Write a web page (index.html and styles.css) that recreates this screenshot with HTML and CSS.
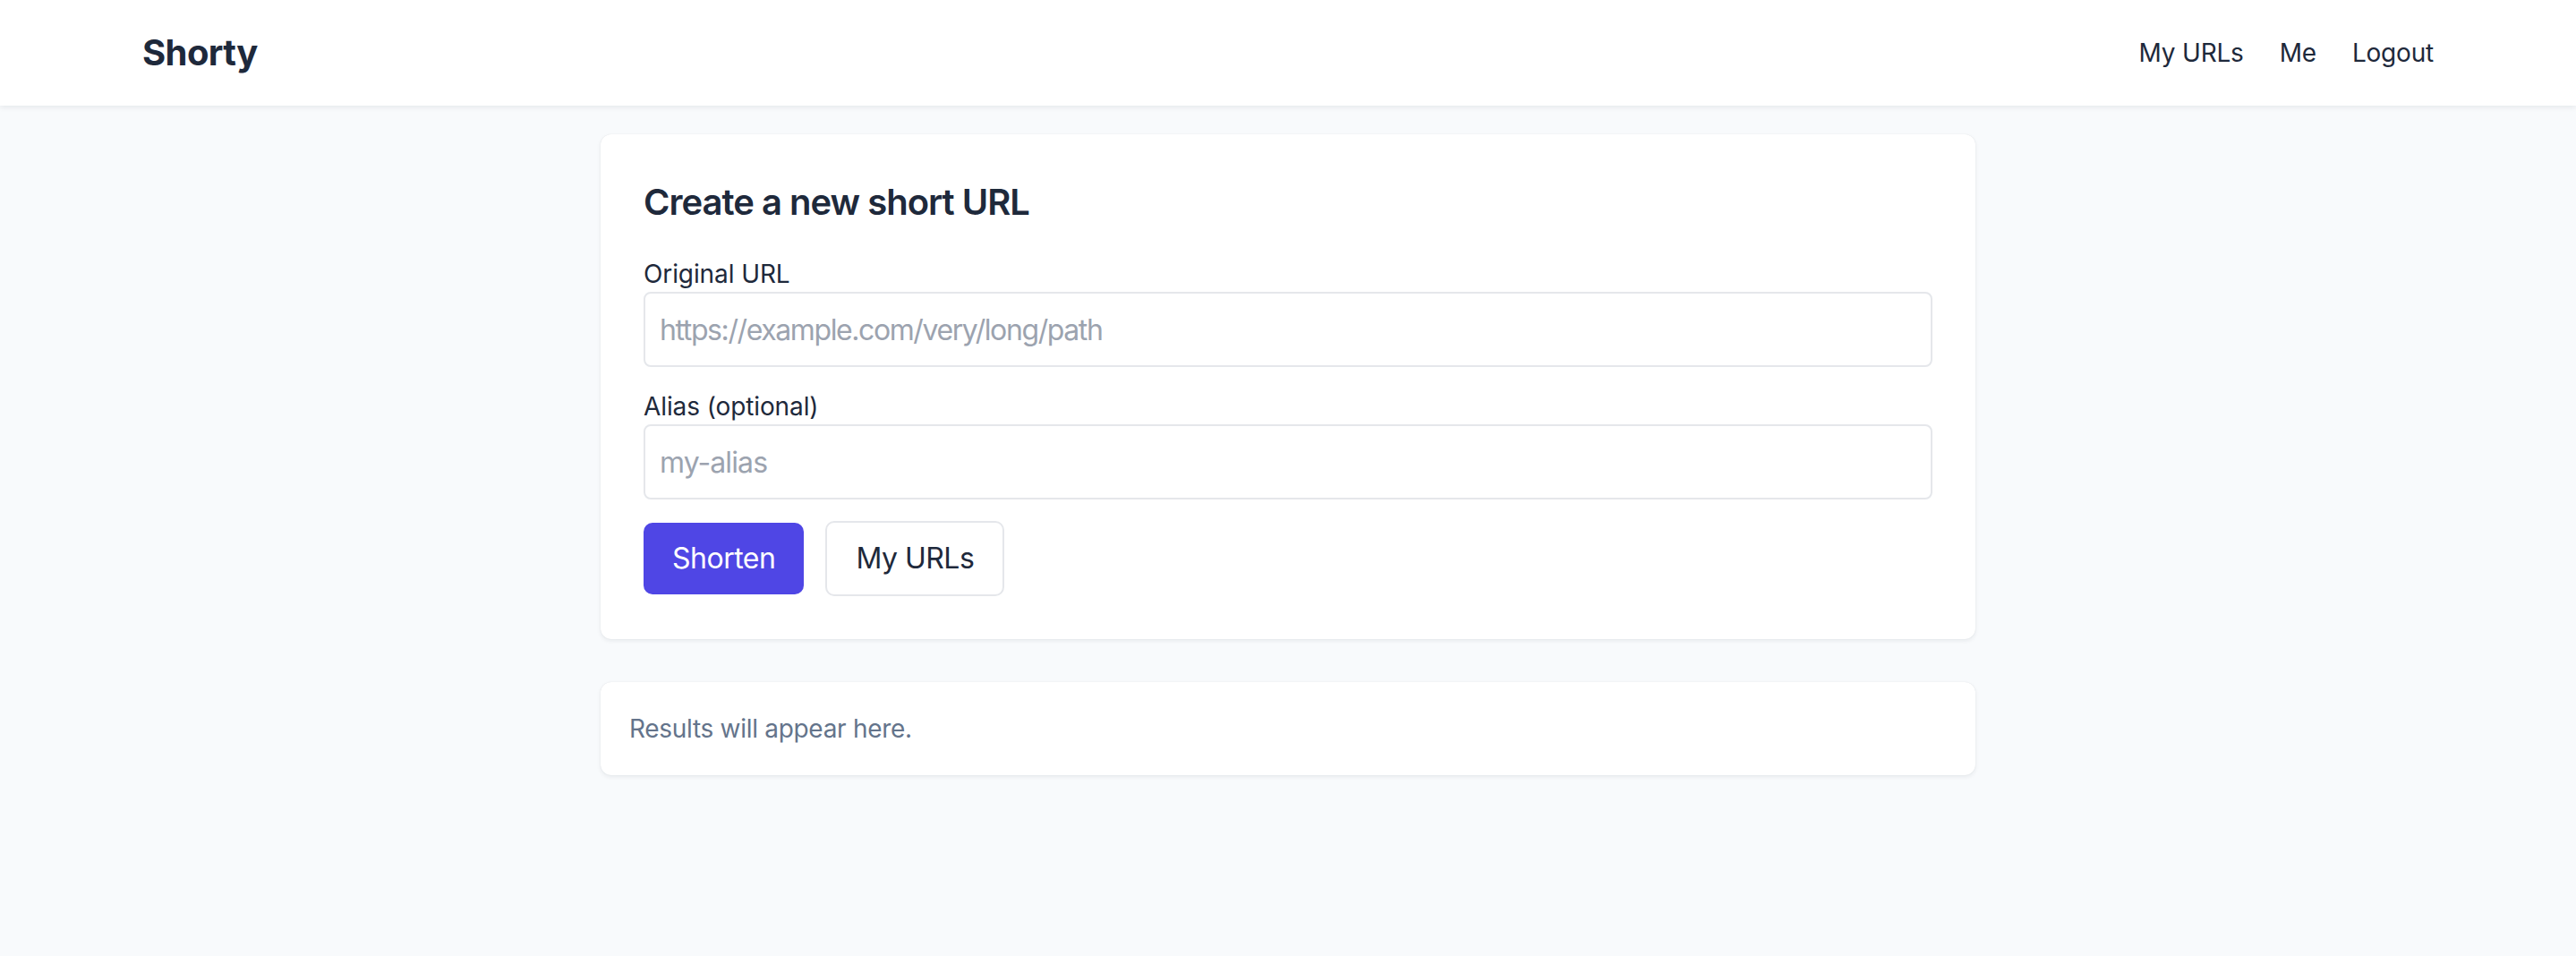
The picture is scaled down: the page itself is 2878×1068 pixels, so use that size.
FILE: index.html
```html
<!DOCTYPE html>
<html lang="en">
<head>
<meta charset="utf-8">
<title>Shorty</title>
<link rel="stylesheet" href="styles.css">
</head>
<body>
<header class="topbar">
  <div class="topbar-inner">
    <a class="brand" href="#">Shorty</a>
    <nav class="nav">
      <a href="#">My URLs</a>
      <a href="#">Me</a>
      <a href="#">Logout</a>
    </nav>
  </div>
</header>
<main class="main">
  <section class="card form-card">
    <h1 class="title">Create a new short URL</h1>
    <form class="form">
      <div class="field">
        <label class="label" for="url">Original URL</label>
        <input class="input input-url" id="url" type="text" placeholder="https://example.com/very/long/path">
      </div>
      <div class="field">
        <label class="label" for="alias">Alias (optional)</label>
        <input class="input" id="alias" type="text" placeholder="my-alias">
      </div>
      <div class="actions">
        <button type="button" class="btn btn-primary">Shorten</button>
        <button type="button" class="btn btn-outline">My URLs</button>
      </div>
    </form>
  </section>
  <section class="card result-card">
    <p class="muted">Results will appear here.</p>
  </section>
</main>
</body>
</html>
```
FILE: styles.css
```css
* { box-sizing: border-box; }
html, body { margin: 0; padding: 0; }
body {
  background: #f8fafc;
  font-family: Inter, "Noto Sans", sans-serif;
  color: #1e293b;
  min-height: 1068px;
}
a { color: inherit; text-decoration: none; }

.topbar {
  background: #ffffff;
  height: 118px;
  box-shadow: 0 2px 6px rgba(15, 23, 42, 0.08);
  position: relative;
}
.topbar-inner {
  max-width: 2560px;
  margin: 0 auto;
  height: 100%;
  display: flex;
  align-items: center;
  justify-content: space-between;
}
.brand {
  font-size: 40px;
  font-weight: 700;
  line-height: 56px;
  color: #1e293b;
  letter-spacing: -0.6px;
}
.nav {
  display: flex;
  gap: 40px;
  font-size: 28px;
  line-height: 40px;
  color: #1e293b;
  letter-spacing: -0.2px;
}

.main {
  max-width: 1536px;
  margin: 32px auto 0;
  display: flex;
  flex-direction: column;
  gap: 48px;
}
.card {
  background: #ffffff;
  border-radius: 12px;
  box-shadow: 0 2px 5px rgba(15, 23, 42, 0.07), 0 0 1px rgba(15, 23, 42, 0.12);
}
.form-card { padding: 48px; }
.title {
  margin: 0 0 32px;
  font-size: 40px;
  line-height: 56px;
  font-weight: 600;
  color: #1e293b;
  letter-spacing: -1px;
}
.form {
  display: flex;
  flex-direction: column;
  gap: 24px;
}
.field { display: flex; flex-direction: column; }
.label {
  font-size: 28px;
  line-height: 40px;
  color: #1e293b;
  letter-spacing: -0.1px;
}
.input {
  height: 84px;
  border: 2px solid #e5e7eb;
  border-radius: 8px;
  padding: 0 16px;
  font-family: Inter, "Noto Sans", sans-serif;
  font-size: 32px;
  letter-spacing: -0.9px;
  color: #1e293b;
  background: #ffffff;
  outline: none;
}
.input-url { letter-spacing: -1.4px; }
.input::placeholder { color: #9ca3af; }
.actions {
  display: flex;
  align-items: center;
  gap: 24px;
}
.btn {
  font-family: Inter, "Noto Sans", sans-serif;
  font-size: 32px;
  line-height: 40px;
  letter-spacing: -0.5px;
  padding: 0 32px;
  border-radius: 10px;
  cursor: pointer;
}
.btn-primary {
  height: 80px;
  background: #4f46e5;
  color: #ffffff;
  border: none;
}
.btn-outline {
  height: 84px;
  background: #ffffff;
  color: #1e293b;
  border: 2px solid #e5e7eb;
}
.result-card { padding: 32px; }
.muted {
  margin: 0;
  font-size: 28px;
  line-height: 40px;
  color: #64748b;
  letter-spacing: -0.3px;
}
```
